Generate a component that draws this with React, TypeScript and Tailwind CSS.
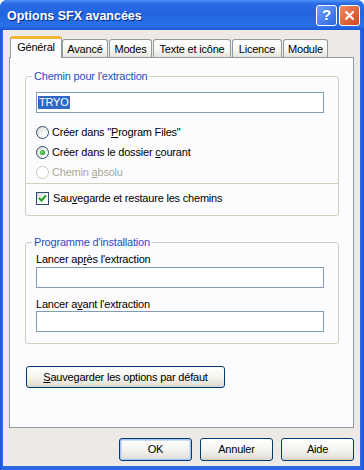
import type { ReactNode } from 'react';

const tabs = [
  { label: 'Général', width: 'w-[52px]', margin: 'ml-[1px]', selected: true },
  { label: 'Avancé', width: 'w-[46px]', margin: 'ml-0' },
  { label: 'Modes', width: 'w-[43px]', margin: 'ml-[1px]' },
  { label: 'Texte et icône', width: 'w-[78px]', margin: 'ml-[1px]' },
  { label: 'Licence', width: 'w-[50px]', margin: 'ml-[1px]' },
  { label: 'Module', width: 'w-[45px]', margin: 'ml-[1px]' },
];

function Radio({ checked, disabled }: { checked?: boolean; disabled?: boolean }) {
  return (
    <span
      className={
        disabled
          ? 'w-[13px] h-[13px] rounded-full border border-[#CAC8BB] bg-white flex items-center justify-center'
          : 'w-[13px] h-[13px] rounded-full border border-[#2C4C72] bg-[linear-gradient(135deg,#D8D8D2,#FFFFFF_75%)] flex items-center justify-center'
      }
    >
      {checked && (
        <span className="w-[5px] h-[5px] rounded-full bg-[radial-gradient(circle_at_40%_40%,#7FE07F,#21A121_70%)]" />
      )}
    </span>
  );
}

function Checkbox() {
  return (
    <span className="w-[13px] h-[13px] border border-[#2C4C72] bg-[linear-gradient(135deg,#DCDCD7,#FFFFFF_75%)] flex items-center justify-center">
      <svg width="9" height="9" viewBox="0 0 9 9">
        <path d="M1 4 L3.5 6.5 L8 1.5" fill="none" stroke="#21A121" strokeWidth="2" />
      </svg>
    </span>
  );
}

function Option({ children, radio }: { children: ReactNode; radio: ReactNode }) {
  return (
    <div className="h-[20px] flex items-center gap-[3px] pl-[10px]">
      {radio}
      {children}
    </div>
  );
}

function XpButton({ children, className, isDefault }: { children: ReactNode; className: string; isDefault?: boolean }) {
  return (
    <button
      className={
        'rounded-[3px] border border-[#003C74] bg-[linear-gradient(to_bottom,#FFFFFF,#F4F4F0_50%,#E6E3DA_85%,#D6D0C5)] text-black flex items-center justify-center ' +
        (isDefault ? 'shadow-[inset_0_0_0_1px_#A9C3F0,inset_0_0_0_2px_#CEDDF7] ' : '') +
        className
      }
    >
      {children}
    </button>
  );
}

function GroupBox({ title, children }: { title: string; children: ReactNode }) {
  return (
    <fieldset className="border border-[#D0D0BF] rounded-[3px] w-[314px]">
      <legend className="ml-[6px] px-[2px] leading-[12px] text-[#1F4FC0]">{title}</legend>
      {children}
    </fieldset>
  );
}

export default function App() {
  return (
    <div className="w-[364px] h-[470px] flex flex-col bg-[linear-gradient(to_right,#1A4FD8,#2A68E6_2px,#2A68E6_361px,#1A4FD8)] rounded-t-[7px] overflow-hidden text-[11px] tracking-[-0.2px] font-['Liberation_Sans',Arial,sans-serif] text-black">
      {/* Title bar */}
      <div className="h-[30px] flex items-center pl-[7px] pr-[4px] bg-[linear-gradient(to_bottom,#4C92F5,#2A6BE4_12%,#2264E0_45%,#2A70E8_85%,#1D58D8)]">
        <span className="text-white font-bold text-[12.5px] tracking-normal [text-shadow:1px_1px_#0A2A8A] pt-[2px]">
          Options SFX avancées
        </span>
        <div className="ml-auto flex gap-[2px] pt-[1px]">
          <div className="w-[21px] h-[21px] rounded-[3px] border border-white bg-[linear-gradient(135deg,#6FA2F8,#2B66E0)] flex items-center justify-center text-white font-bold text-[15px] tracking-normal">
            ?
          </div>
          <div className="w-[21px] h-[21px] rounded-[3px] border border-white bg-[linear-gradient(135deg,#F08A60,#D2441C)] flex items-center justify-center">
            <svg width="11" height="11" viewBox="0 0 11 11">
              <path d="M1.5 1.5 L9.5 9.5 M9.5 1.5 L1.5 9.5" stroke="white" strokeWidth="2.2" />
            </svg>
          </div>
        </div>
      </div>

      {/* Client area */}
      <div className="flex-1 ml-[3px] mr-[4px] mb-[4px] bg-[#EDEAE6] flex flex-col pt-[6px] px-[6px]">
        <div className="h-[21px] flex items-end">
          {tabs.map((t) =>
            t.selected ? (
              <div
                key={t.label}
                className={`${t.width} ${t.margin} h-[22px] -mb-[1px] relative z-10 rounded-t-[3px] border-x border-[#919B9C] border-t-[3px] border-t-[#F7B534] bg-[#FCFCFE] flex items-center justify-center pb-[3px]`}
              >
                {t.label}
              </div>
            ) : (
              <div
                key={t.label}
                className={`${t.width} ${t.margin} h-[18px] rounded-t-[3px] border border-b-0 border-[#919B9C] bg-[linear-gradient(to_bottom,#FFFFFF,#F6F6F2_60%,#E6E4DC)] flex items-center justify-center pt-[1px]`}
              >
                {t.label}
              </div>
            ),
          )}
        </div>

        <div className="h-[371px] border border-[#919B9C] bg-[#FCFCFE] pt-[12px] pl-[15px] flex flex-col">
          <GroupBox title="Chemin pour l'extraction">
            <div className="pt-[10px] pl-[10px]">
              <div className="w-[288px] h-[21px] border border-[#7F9DB9] bg-white flex items-center pl-[1px]">
                <span className="bg-[#316AC5] text-white leading-[13px] px-[1px]">TRYO</span>
              </div>
            </div>
            <div className="pt-[9px] pb-[1px]">
              <Option radio={<Radio />}>
                <span>
                  Créer dans "<u>P</u>rogram Files"
                </span>
              </Option>
              <Option radio={<Radio checked />}>
                <span>
                  Créer dans le dossier <u>c</u>ourant
                </span>
              </Option>
              <Option radio={<Radio disabled />}>
                <span className="text-[#ACA899]">
                  Chemin <u>a</u>bsolu
                </span>
              </Option>
            </div>
            <div className="h-px bg-[#D0D0BF]" />
            <div className="pt-[8px] pb-[10px] pl-[10px] flex items-center gap-[4px] h-[31px]">
              <Checkbox />
              <span>
                Sau<u>v</u>egarde et restaure les chemins
              </span>
            </div>
          </GroupBox>

          <div className="mt-[20px]">
            <GroupBox title="Programme d'installation">
              <div className="pt-[5px] pl-[10px] pb-[11px]">
                <div className="leading-[13px] mb-[1px]">
                  Lancer ap<u>r</u>ès l'extraction
                </div>
                <div className="w-[288px] h-[21px] border border-[#7F9DB9] bg-white" />
                <div className="leading-[13px] mt-[10px]">
                  Lancer a<u>v</u>ant l'extraction
                </div>
                <div className="w-[288px] h-[21px] border border-[#7F9DB9] bg-white" />
              </div>
            </GroupBox>
          </div>

          <div className="mt-[22px] ml-[1px]">
            <XpButton className="w-[199px] h-[22px]">
              <span>
                <u>S</u>auvegarder les options par défaut
              </span>
            </XpButton>
          </div>
        </div>

        <div className="mt-[10px] flex justify-end gap-[8px]">
          <XpButton className="w-[73px] h-[23px]" isDefault>
            OK
          </XpButton>
          <XpButton className="w-[73px] h-[23px]">Annuler</XpButton>
          <XpButton className="w-[73px] h-[23px]">Aide</XpButton>
        </div>
      </div>
    </div>
  );
}
